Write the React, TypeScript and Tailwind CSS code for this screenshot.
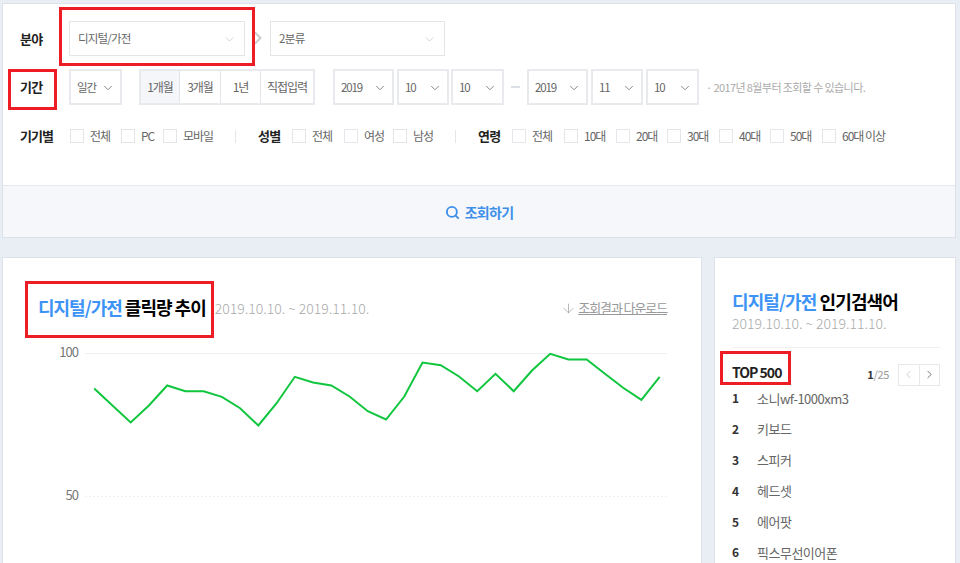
import { Search, ChevronDown, ChevronRight, ChevronLeft, ArrowDown } from "lucide-react";

const font = "font-['Noto_Sans_CJK_KR','Noto_Sans',sans-serif]";

// chart values in px, from top of the svg (y=353 on the page is 0)
const line = [35, 52, 69, 52, 32, 37.7, 37.7, 43.3, 54.7, 72, 49.7, 23.3, 29, 32, 43, 57.7, 66, 43, 9, 11.7, 23, 37.7, 20.3, 37.7, 17, 0.3, 6, 6, 20.3, 34.3, 46.3, 23.3];
const points = line.map((v, i) => `${9.2 + i * 18.24},${v + 10.5}`).join(" ");

const keywords = ["소니wf-1000xm3", "키보드", "스피커", "헤드셋", "에어팟", "픽스무선이어폰"];

function Select({ label, className }: { label: string; className: string }) {
  return (
    <div className={`flex h-[36px] items-center justify-between whitespace-nowrap border-2 border-[#e8eaed] pl-[6px] pr-[5px] pt-[1px] text-[11.5px] tracking-[-1.1px] text-[#666] ${className}`}>
      <span>{label}</span>
      <ChevronDown size={14} strokeWidth={1.5} className="text-[#777]" />
    </div>
  );
}

function Check({ label, className }: { label: string; className: string }) {
  return (
    <div className={`flex shrink-0 items-center text-[12px] tracking-[-1px] text-[#666] ${className}`}>
      <span className="h-[14px] w-[14px] border border-[#e3e5e8]" />
      <span className="-mt-[1px] ml-[6px] whitespace-nowrap">{label}</span>
    </div>
  );
}

export default function App() {
  return (
    <div className={`${font} relative h-[563px] w-[960px] overflow-hidden bg-[#e9edf4]`}>
      <div className="ml-[2px] mt-[3px] h-[235px] w-[954px] border border-[#dde2ea] bg-white">
        <div className="h-[181px] pl-[17px] pt-[16px]">
          {/* 분야 */}
          <div className="flex h-[36px] items-center">
            <div className="w-[49px] pt-[1px] text-[13px] font-bold tracking-[-0.8px] text-[#222]">분야</div>
            <div className="flex h-[35px] w-[176px] items-center justify-between border border-[#e3e5e8] pl-[8px] pr-[8px] pt-[2px] text-[11.5px] tracking-[-0.8px] text-[#666]">
              <span>디지털/가전</span>
              <ChevronDown size={13} strokeWidth={1.2} className="text-[#bbb]" />
            </div>
            <ChevronRight size={20} strokeWidth={2.5} className="ml-[3px] text-[#cccccc]" />
            <div className="ml-[2px] flex h-[35px] w-[175px] items-center justify-between border border-[#e3e5e8] pl-[8px] pr-[8px] pt-[2px] text-[11.5px] tracking-[-0.6px] text-[#666]">
              <span>2분류</span>
              <ChevronDown size={13} strokeWidth={1.2} className="text-[#bbb]" />
            </div>
          </div>
          {/* 기간 */}
          <div className="mt-[13px] flex h-[36px] items-center">
            <div className="w-[49px] text-[13px] font-bold tracking-[-0.8px] text-[#222]">기간</div>
            <Select label="일간" className="w-[53px]" />
            <div className="ml-[17px] flex h-[36px] w-[176px] border-2 border-[#e8eaed] text-center text-[12px] leading-[32px] tracking-[-1px] text-[#666]">
              <div className="w-[39px] border-r border-[#e3e5e8] bg-[#f5f6fa]">1개월</div>
              <div className="w-[41px] border-r border-[#e3e5e8]">3개월</div>
              <div className="w-[40px] border-r border-[#e3e5e8]">1년</div>
              <div className="flex-1">직접입력</div>
            </div>
            <Select label="2019" className="ml-[18px] w-[61px]" />
            <Select label="10" className="ml-[3px] w-[52px]" />
            <Select label="10" className="ml-[2px] w-[53px]" />
            <div className="ml-[7px] h-[2px] w-[9px] bg-[#dcdfe3]" />
            <Select label="2019" className="ml-[7px] w-[61px]" />
            <Select label="11" className="ml-[3px] w-[52px]" />
            <Select label="10" className="ml-[3px] w-[53px]" />
            <div className="ml-[7px] whitespace-nowrap text-[11px] tracking-[-0.6px] text-[#aaa]">· 2017년 8월부터 조회할 수 있습니다.</div>
          </div>
          {/* 기기별 / 성별 / 연령 */}
          <div className="mt-[24px] flex h-[14px] items-center">
            <div className="w-[50px] -mt-[1px] text-[13px] font-bold tracking-[-1px] text-[#222]">기기별</div>
            <Check label="전체" className="w-[51px]" />
            <Check label="PC" className="w-[42px]" />
            <Check label="모바일" className="w-[72px]" />
            <div className="h-[13px] w-px bg-[#e3e5e8]" />
            <div className="ml-[22px] -mt-[1px] w-[34px] text-[13px] font-bold tracking-[-0.8px] text-[#222]">성별</div>
            <Check label="전체" className="w-[52px]" />
            <Check label="여성" className="w-[49px]" />
            <Check label="남성" className="w-[62px]" />
            <div className="h-[13px] w-px bg-[#e3e5e8]" />
            <div className="ml-[22px] -mt-[1px] w-[34px] text-[13px] font-bold tracking-[-0.8px] text-[#222]">연령</div>
            <Check label="전체" className="w-[52px]" />
            <Check label="10대" className="w-[52px]" />
            <Check label="20대" className="w-[51px]" />
            <Check label="30대" className="w-[52px]" />
            <Check label="40대" className="w-[51px]" />
            <Check label="50대" className="w-[52px]" />
            <Check label="60대 이상" className="w-[70px]" />
          </div>
        </div>
        <div className="flex h-[52px] items-center justify-center border-t border-[#e6e8ec] bg-[#f5f7fb] pt-[1px] text-[14px] font-bold tracking-[-0.7px] text-[#3d8fe8]">
          <Search size={15} strokeWidth={3} className="mr-[5px]" />
          조회하기
        </div>
      </div>

      <div className="ml-[2px] mt-[19px] flex gap-[12px]">
        {/* 클릭량 추이 */}
        <div className="h-[320px] w-[700px] border border-[#dde2ea] bg-white pl-[35px] pr-[34px] pt-[37px]">
          <div className="flex items-center">
            <div className="text-[18px] font-bold leading-[24px] tracking-[-1px] text-black">
              <span className="text-[#3d94f6]">디지털/가전</span> 클릭량 추이
            </div>
            <div className="ml-[9px] mt-[2px] text-[14px] font-light text-[#aaa]">2019.10.10. ~ 2019.11.10.</div>
            <div className="ml-auto mt-[2px] flex items-center text-[13px] tracking-[-1.1px] text-[#999]">
              <ArrowDown size={15} strokeWidth={1.1} className="mr-[2px]" />
              <span className="underline">조회결과 다운로드</span>
            </div>
          </div>
          <div className="-ml-[3px] mt-[34px] flex">
            <div className="relative w-[52px] shrink-0 text-right text-[13px] tracking-[-1px] text-[#777]">
              <div className="absolute right-[9px] top-[-11px]">100</div>
              <div className="absolute right-[9px] top-[132px]">50</div>
            </div>
            <svg width="584" height="160" className="-ml-[2px] -mt-[10px] block">
              <line x1="0" y1="10.5" x2="583" y2="10.5" stroke="#eef0f2" />
              <line x1="0" y1="153.5" x2="583" y2="153.5" stroke="#eef0f2" strokeDasharray="2 2" />
              <polyline points={points} fill="none" stroke="#11c63f" strokeWidth="2" />
            </svg>
          </div>
        </div>

        {/* 인기검색어 */}
        <div className="h-[320px] w-[242px] border border-[#dde2ea] bg-white pl-[17px] pr-[15px] pt-[31px]">
          <div className="text-[18px] font-bold leading-[24px] tracking-[-0.9px] text-black">
            <span className="text-[#3d94f6]">디지털/가전</span> 인기검색어
          </div>
          <div className="mt-[1px] text-[14px] font-light leading-[18px] text-[#aaa]">2019.10.10. ~ 2019.11.10.</div>
          <div className="mt-[15px] flex items-center justify-between border-t border-[#eef0f2] pt-[14px]">
            <div className="mb-[4px] text-[14px] font-bold tracking-[-1px] text-[#222]">TOP 500</div>
            <div className="flex items-center">
              <div className="mr-[9px] text-[11px] tracking-[-0.3px] text-[#999]"><b className="text-[#333]">1</b>/25</div>
              <div className="flex h-[22px] w-[42px] border border-[#e6e8ec]">
                <div className="flex flex-1 items-center justify-center border-r border-[#e6e8ec]"><ChevronLeft size={13} strokeWidth={1.3} className="text-[#bbb]" /></div>
                <div className="flex flex-1 items-center justify-center"><ChevronRight size={13} strokeWidth={1.5} className="text-[#555]" /></div>
              </div>
            </div>
          </div>
          <ol className="-mt-[4px]">
            {keywords.map((k, i) => (
              <li key={k} className="flex h-[30.8px] items-center text-[13px] tracking-[-0.5px] text-[#666]">
                <b className="w-[25px] text-[12px] text-[#333]">{i + 1}</b>
                {k}
              </li>
            ))}
          </ol>
        </div>
      </div>

      {/* 빨간 강조 표시 */}
      <div className="pointer-events-none absolute left-[59px] top-[7px] h-[59px] w-[196px] border-[3px] border-[#ee1c25]" />
      <div className="pointer-events-none absolute left-[8px] top-[69px] h-[41px] w-[49px] border-[3px] border-[#ee1c25]" />
      <div className="pointer-events-none absolute left-[25px] top-[281px] h-[57px] w-[189px] border-[3px] border-[#ee1c25]" />
      <div className="pointer-events-none absolute left-[720px] top-[351px] h-[34px] w-[71px] border-[3px] border-[#ee1c25]" />
    </div>
  );
}
